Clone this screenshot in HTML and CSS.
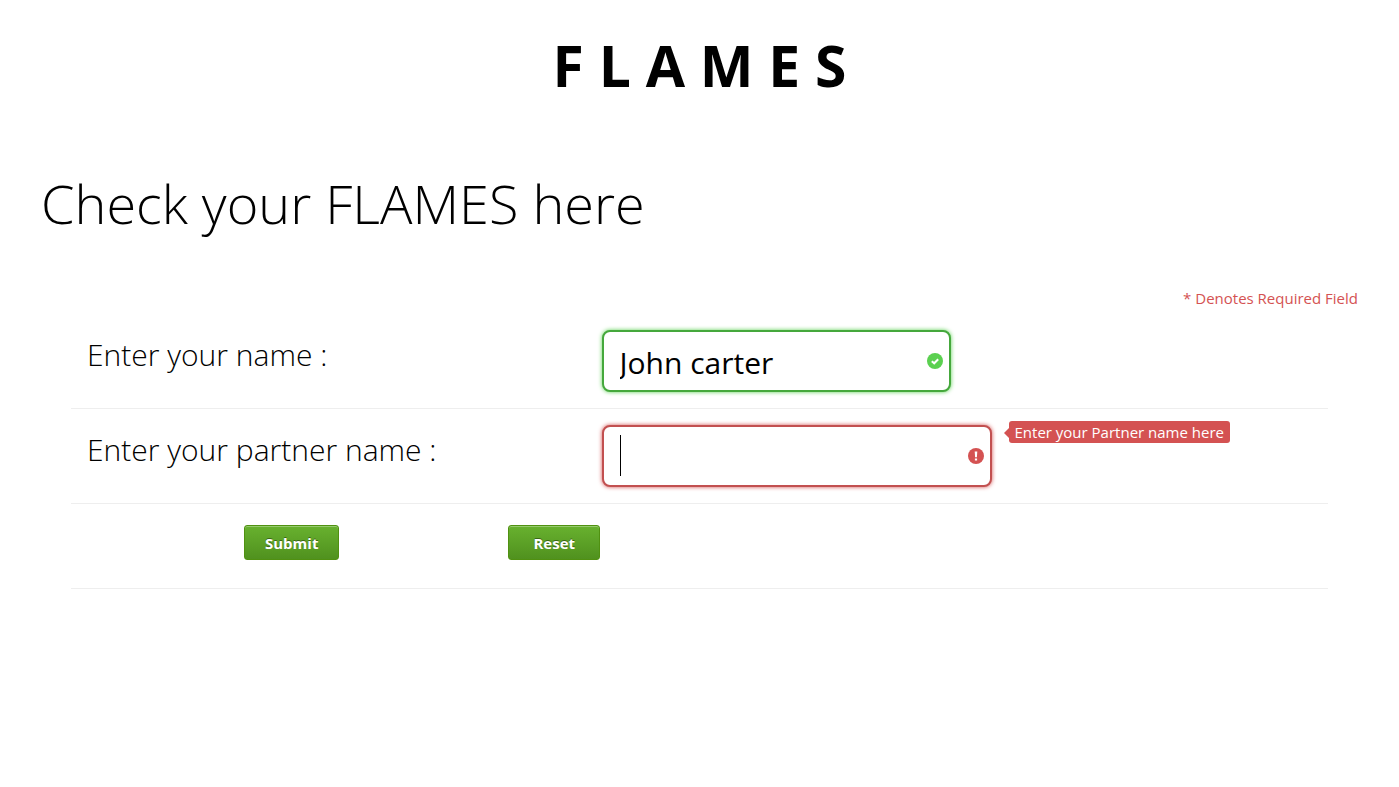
FILE: index.html
```html
<!DOCTYPE html>
<html lang="en">
<head>
    <meta charset="UTF-8">
    <meta name="viewport" content="width=device-width, initial-scale=1.0">
    <title>FLAMES</title>
    <link rel="stylesheet" href="styles.css">
</head>
<body>
    <h1>F L A M E S</h1>

    <form class="flames-form">
        <h2>Check your FLAMES here</h2>
        <p class="required-note">* Denotes Required Field</p>

        <ul>
            <li>
                <label for="yourName">Enter your name :</label>
                <div class="field">
                    <input type="text" id="yourName" class="valid" value="John carter" required>
                    <svg class="status" viewBox="0 0 16 16">
                        <circle cx="8" cy="8" r="8" fill="#5bd050"/>
                        <path d="M4.8 8.2 L7.2 10.3 L11.2 6.2" fill="none" stroke="#fff" stroke-width="2"/>
                    </svg>
                </div>
            </li>
            <li>
                <label for="partnerName">Enter your partner name :</label>
                <div class="field">
                    <input type="text" id="partnerName" class="invalid" required>
                    <span class="caret"></span>
                    <svg class="status" viewBox="0 0 16 16">
                        <circle cx="8" cy="8" r="8" fill="#d45252"/>
                        <path d="M6.7 3.5 H9.3 L8.9 9.3 H7.1 Z M6.9 10.4 H9.1 V12.5 H6.9 Z" fill="#fff"/>
                    </svg>
                </div>
                <span class="hint">Enter your Partner name here</span>
            </li>
            <li class="buttons">
                <button type="submit">Submit</button>
                <button type="reset">Reset</button>
            </li>
        </ul>
    </form>
</body>
</html>
```

FILE: styles.css
```css
* {
    box-sizing: border-box;
}
body {
    font-family: "Open Sans", "Noto Sans", sans-serif;
    margin: 0;
    background: #fff;
    color: #000;
}
h1 {
    margin: 27px 0 0;
    font-size: 57px;
    line-height: 76px;
    text-align: center;
}
.flames-form {
    padding: 0 41px;
}
h2 {
    margin: 62px 0 0;
    font-size: 54px;
    line-height: 76px;
    font-weight: 300;
}
.required-note {
    margin: 47px 0 0;
    font-size: 15px;
    line-height: 20px;
    text-align: right;
    color: #d45252;
}
ul {
    list-style: none;
    margin: 6px 30px 0;
    padding: 0;
}
li {
    display: flex;
    align-items: flex-start;
    padding: 16px;
    border-bottom: 1px solid #eee;
}
label {
    width: 42%;
    margin-top: 3px;
    font-size: 30px;
    line-height: 44px;
    font-weight: 300;
}
.field {
    position: relative;
}
input[type="text"] {
    display: block;
    width: 349px;
    height: 62px;
    padding: 3px 16px 0;
    border: 2px solid #28921f;
    border-radius: 8px;
    outline: none;
    font-family: inherit;
    font-size: 30px;
    color: #000;
}
input.valid {
    border-color: #45a83c;
    box-shadow: 0 0 4px #5cd053;
}
input.invalid {
    width: 390px;
    border-color: #c25050;
    box-shadow: 0 0 4px #d45252;
}
.status {
    position: absolute;
    top: 23px;
    right: 8px;
    width: 16px;
    height: 16px;
}
.caret {
    position: absolute;
    top: 10px;
    left: 18px;
    width: 1px;
    height: 41px;
    background: #000;
}
.hint {
    position: relative;
    margin: -4px 0 0 17px;
    padding: 0 6px;
    border-radius: 3px;
    background: #d45252;
    color: #fff;
    font-size: 15px;
    line-height: 22px;
}
.hint::before {
    content: "";
    position: absolute;
    top: 7px;
    left: -5px;
    border: 5px solid transparent;
    border-left: 0;
    border-right-color: #d45252;
}
.buttons {
    padding: 21px 16px 28px 173px;
    gap: 169px;
}
button {
    height: 35px;
    padding: 0 20px;
    border: 1px solid #509111;
    border-radius: 3px;
    background: linear-gradient(#68b12f, #50911e);
    box-shadow: inset 0 1px 0 #96ca6d;
    color: #fff;
    font-family: inherit;
    font-size: 15px;
    font-weight: bold;
    text-shadow: 0 -1px 0 #396715;
    cursor: pointer;
}
button[type="reset"] {
    padding: 0 24px;
}
button:hover {
    opacity: 0.85;
}
```
